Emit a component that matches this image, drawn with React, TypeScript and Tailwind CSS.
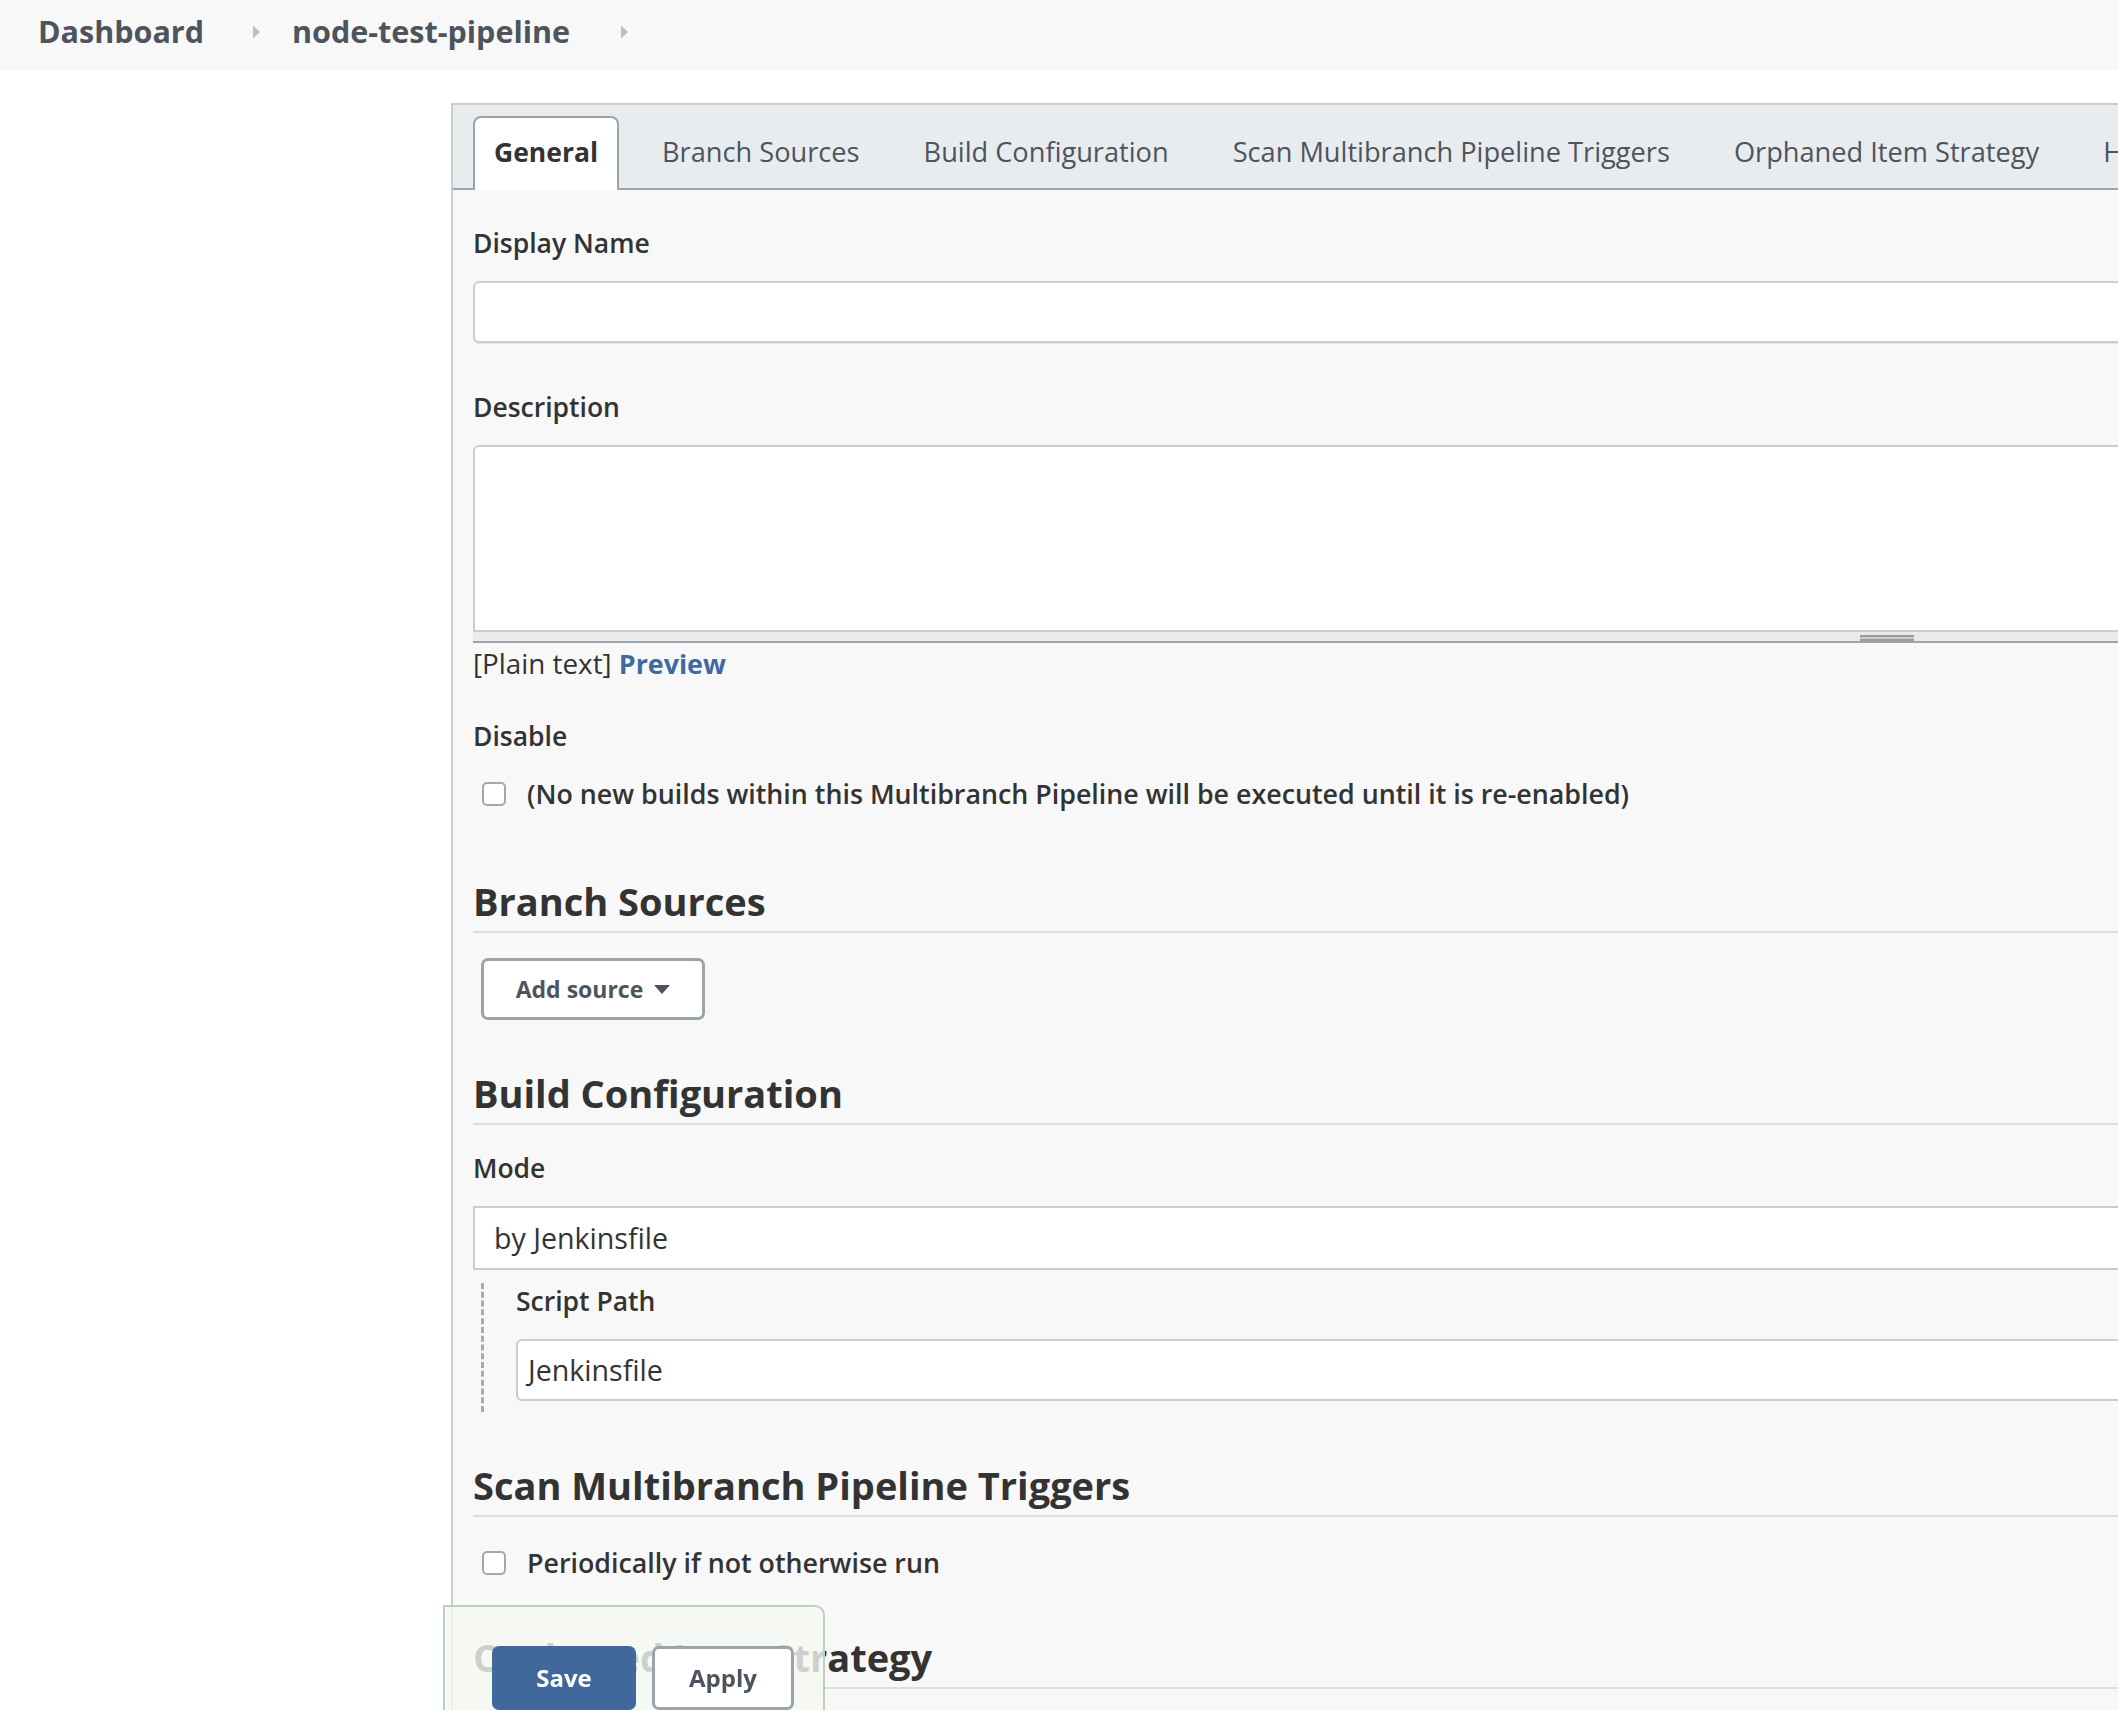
import React from "react";

function TriRight({ className = "" }: { className?: string }) {
  return (
    <svg className={className} width="9" height="16" viewBox="0 0 9 16">
      <path d="M1 1.5 L8 8 L1 14.5 Z" fill="#bdbdbd" />
    </svg>
  );
}

function Checkbox() {
  return <div className="w-[24px] h-[24px] shrink-0 rounded-[5px] border-2 border-[#a7a7a7] bg-white" />;
}

function SectionHeading({ children, mt }: { children: React.ReactNode; mt: string }) {
  return (
    <div className={`${mt} pb-[5px] border-b-2 border-[#dedede]`}>
      <h2 className="h-[50px] leading-[50px] text-[38px] font-bold text-[#333] whitespace-nowrap">{children}</h2>
    </div>
  );
}

export default function App() {
  const tabs = [
    "Branch Sources",
    "Build Configuration",
    "Scan Multibranch Pipeline Triggers",
    "Orphaned Item Strategy",
    "Health metrics",
    "Properties",
  ];
  return (
    <div className="relative h-screen w-full overflow-hidden bg-white text-[#333] font-['Open_Sans',sans-serif]">
      {/* Breadcrumb bar */}
      <header className="flex h-[70px] items-center bg-[#f8f8f8] pb-[7px] pl-[38px] text-[30.5px] font-bold text-[#4d545d] whitespace-nowrap">
        <span>Dashboard</span>
        <TriRight className="ml-[48px]" />
        <span className="ml-[31px]">node-test-pipeline</span>
        <TriRight className="ml-[50px]" />
      </header>

      <div className="pl-[451px] pt-[33px]">
        <div className="w-[1800px] border-l-2 border-t-2 border-[#cccccc] bg-[#f8f8f8]">
          {/* Tabs */}
          <div className="flex h-[85px] items-end gap-[22px] whitespace-nowrap border-b-2 border-[#9ba3ab] bg-[#e9ecef] pl-[20px] text-[27.2px]">
            <div className="-mb-[2px] flex h-[74px] items-center rounded-t-[8px] border-2 border-b-0 border-[#9ba3ab] bg-white px-[19px] pb-[3px] text-[26.5px] font-bold text-[#333]">
              General
            </div>
            {tabs.map((t) => (
              <div
                key={t}
                className="-mb-[2px] flex h-[74px] items-center border-2 border-b-0 border-transparent px-[19px] pb-[4px] text-[#4d545d]"
              >
                {t}
              </div>
            ))}
          </div>

          {/* Form */}
          <div className="pl-[20px] pb-[200px] text-[26.8px]">
            <div className="mt-[35px] h-[36px] leading-[36px] text-[26.5px] font-semibold">Display Name</div>
            <div className="mt-[20px] h-[62px] rounded-[6px] border-2 border-[#cccccc] bg-white shadow-[0_1px_0_#e6e6e6]" />

            <div className="mt-[46px] h-[36px] leading-[36px] text-[26.5px] font-semibold">Description</div>
            <div className="mt-[20px]">
              <div className="h-[187px] rounded-t-[6px] border-2 border-[#cccccc] bg-white" />
              <div className="h-[11px] border-b-2 border-[#9ba3ab] bg-[#e9ecef] pt-[3px]">
                <div className="ml-[1387px] h-[6px] w-[54px] border-y-2 border-[#9a9a9a] bg-[#cfcfcf]" />
              </div>
            </div>
            <div className="mt-[2px] h-[36px] leading-[36px]">
              <span className="text-[27.8px]">[Plain text] </span>
              <span className="font-bold text-[#3f6aa1]">Preview</span>
            </div>

            <div className="mt-[37px] h-[36px] leading-[36px] text-[26.5px] font-semibold">Disable</div>
            <div className="mt-[22px] flex h-[36px] items-center pl-[9px]">
              <Checkbox />
              <span className="ml-[21px] font-semibold whitespace-nowrap">
                (No new builds within this Multibranch Pipeline will be executed until it is re-enabled)
              </span>
            </div>

            <SectionHeading mt="mt-[64px]">Branch Sources</SectionHeading>
            <div className="ml-[8px] mt-[25px] flex h-[62px] w-[224px] items-center justify-center gap-[11px] rounded-[7px] border-[3px] border-[#9ba3ab] bg-white text-[23px] font-bold text-[#4d545d]">
              <span>Add source</span>
              <svg width="16" height="9" viewBox="0 0 16 9">
                <path d="M0 0 L16 0 L8 9 Z" fill="#4d545d" />
              </svg>
            </div>

            <SectionHeading mt="mt-[48px]">Build Configuration</SectionHeading>
            <div className="mt-[25px] h-[36px] leading-[36px] text-[26.5px] font-semibold">Mode</div>
            <div className="mt-[20px] flex h-[64px] items-center border-2 border-[#cccccc] bg-white pl-[19px] text-[28.6px]">
              by Jenkinsfile
            </div>
            <div className="ml-[8px] mt-[13px] border-l-[3px] border-dashed border-[#aaaaaa] pb-[11px] pl-[32px]">
              <div className="h-[36px] leading-[36px] text-[26.5px] font-semibold">Script Path</div>
              <div className="mt-[20px] flex h-[62px] items-center rounded-[6px] border-2 border-[#cccccc] bg-white pl-[10px] text-[28.6px]">
                Jenkinsfile
              </div>
            </div>

            <SectionHeading mt="mt-[48px]">Scan Multibranch Pipeline Triggers</SectionHeading>
            <div className="mt-[28px] flex h-[36px] items-center pl-[9px]">
              <Checkbox />
              <span className="ml-[21px] font-semibold whitespace-nowrap">Periodically if not otherwise run</span>
            </div>

            <SectionHeading mt="mt-[51px]">Orphaned Item Strategy</SectionHeading>
            <div className="mt-[25px] h-[36px] leading-[36px] font-semibold">Discard old items</div>
          </div>
        </div>
      </div>

      {/* Sticky bottom bar */}
      <div className="fixed bottom-0 left-[443px] flex h-[105px] w-[382px] items-start gap-[16px] rounded-tr-[10px] border-2 border-b-0 border-[#bcd0bf] bg-[#f5f8f3]/80 pl-[47px] pt-[39px] text-[24px] font-bold">
        <div className="flex h-[64px] w-[144px] items-center justify-center rounded-[7px] bg-[#41689a] text-white">
          Save
        </div>
        <div className="flex h-[64px] w-[142px] items-center justify-center rounded-[7px] border-[3px] border-[#9ba3ab] bg-white text-[#4d545d]">
          Apply
        </div>
      </div>
    </div>
  );
}
